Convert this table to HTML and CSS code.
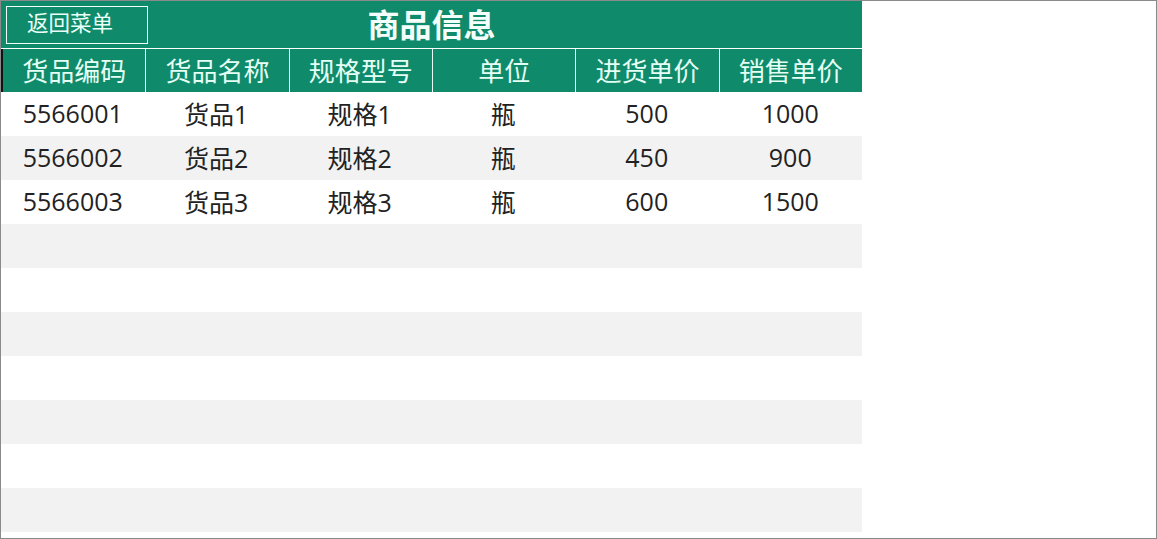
FILE: index.html
```html
<!DOCTYPE html>
<html lang="zh">
<head>
<meta charset="utf-8">
<title>商品信息</title>
<link rel="stylesheet" href="styles.css">
</head>
<body>
<div class="frame">
  <div class="sheet">
    <div class="title-row">
      <button class="back-btn">返回菜单</button>
      <div class="title">商品信息</div>
    </div>
    <div class="head-row">
      <div class="hcell">货品编码</div>
      <div class="hcell">货品名称</div>
      <div class="hcell">规格型号</div>
      <div class="hcell">单位</div>
      <div class="hcell">进货单价</div>
      <div class="hcell">销售单价</div>
    </div>
    <div class="rows">
      <div class="row"><div class="cell">5566001</div><div class="cell">货品1</div><div class="cell">规格1</div><div class="cell">瓶</div><div class="cell">500</div><div class="cell">1000</div></div>
      <div class="row alt"><div class="cell">5566002</div><div class="cell">货品2</div><div class="cell">规格2</div><div class="cell">瓶</div><div class="cell">450</div><div class="cell">900</div></div>
      <div class="row"><div class="cell">5566003</div><div class="cell">货品3</div><div class="cell">规格3</div><div class="cell">瓶</div><div class="cell">600</div><div class="cell">1500</div></div>
      <div class="row alt"></div>
      <div class="row"></div>
      <div class="row alt"></div>
      <div class="row"></div>
      <div class="row alt"></div>
      <div class="row"></div>
      <div class="row alt"></div>
    </div>
  </div>
</div>
</body>
</html>
```
FILE: styles.css
```css
* { box-sizing: border-box; }
html, body { margin: 0; padding: 0; background: #fff; }
body {
  font-family: "Noto Sans CJK SC", "Noto Sans", sans-serif;
}
.frame {
  width: 1157px;
  height: 539px;
  border: 1px solid #8a8a8a;
  overflow: hidden;
}
.sheet {
  width: 861px;
}
.title-row {
  position: relative;
  height: 47px;
  background: #0f8b6c;
  display: flex;
  align-items: center;
  justify-content: center;
}
.back-btn {
  position: absolute;
  left: 5px;
  top: 5px;
  width: 142px;
  height: 38px;
  border: 1px solid #f2fff9;
  background: transparent;
  color: #eafff6;
  font-family: "Noto Sans CJK SC", sans-serif;
  font-size: 21.5px;
  line-height: 1;
  padding: 0 0 6px 20px;
  text-align: left;
  margin: 0;
}
.title {
  color: #f4fffb;
  font-size: 32px;
  font-weight: 700;
  line-height: 1;
  padding-bottom: 4px;
}
.head-row {
  margin-top: 1px;
  display: grid;
  grid-template-columns: repeat(6, 1fr);
  gap: 1px;
  background: #eafff6;
  border-left: 2px solid #111;
  height: 43px;
}
.hcell {
  background: #0f8b6c;
  color: #e6fff4;
  font-size: 26px;
  display: flex;
  align-items: center;
  justify-content: center;
  padding-bottom: 3px;
}
.row {
  height: 44px;
  display: grid;
  grid-template-columns: repeat(6, 1fr);
  background: #fff;
}
.row.alt { background: #f2f2f2; }
.cell {
  display: flex;
  align-items: center;
  justify-content: center;
  color: #222;
  font-family: "Open Sans", "Noto Sans CJK SC", sans-serif;
  font-size: 25px;
  padding-bottom: 2px;
}
```
